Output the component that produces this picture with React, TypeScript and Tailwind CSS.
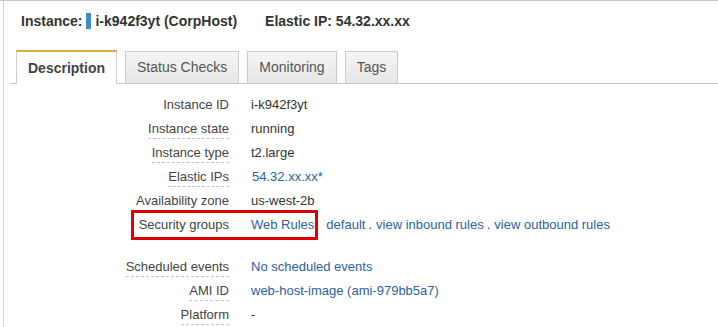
import React from 'react'

type Row = { label: string; value: React.ReactNode; dashed?: boolean; gapBefore?: boolean; highlight?: boolean }

const Link: React.FC<{ children: React.ReactNode }> = ({ children }) => (
  <a className="text-[#2b63a3] cursor-pointer">{children}</a>
)

const rows: Row[] = [
  { label: 'Instance ID', value: 'i-k942f3yt' },
  { label: 'Instance state', value: 'running', dashed: true },
  { label: 'Instance type', value: 't2.large', dashed: true },
  { label: 'Elastic IPs', value: <span className="ml-[1px]"><Link>54.32.xx.xx*</Link></span>, dashed: true },
  { label: 'Availability zone', value: 'us-west-2b', dashed: true },
  {
    label: 'Security groups',
    highlight: true,
    value: (
      <>
        <Link>Web Rules</Link>
        <span className="ml-[12px]"><Link>default</Link></span>
        <span className="ml-[3px]">.</span>
        <span className="ml-[4px]"><Link>view inbound rules</Link></span>
        <span className="ml-[3px]">.</span>
        <span className="ml-[4px]"><Link>view outbound rules</Link></span>
      </>
    ),
  },
  { label: 'Scheduled events', value: <Link>No scheduled events</Link>, dashed: true, gapBefore: true },
  { label: 'AMI ID', value: <Link>web-host-image (ami-979bb5a7)</Link>, dashed: true },
  { label: 'Platform', value: '-', dashed: true },
]

const tabs = ['Description', 'Status Checks', 'Monitoring', 'Tags']

export default function App() {
  return (
    <div className="w-[718px] h-[327px] overflow-hidden bg-white border-t border-[#c8c8c8] font-['Liberation_Sans',Arial,sans-serif]">
      <div className="ml-[3px] h-full border-l border-[#d4d4d4]">
        {/* header */}
        <div className="h-[40px] flex items-center pl-[17px] text-[14px] font-bold text-[#333]">
          <span>Instance:</span>
          <span className="ml-[4px] w-[5px] h-[16px] bg-[#3c8dd0]" />
          <span className="ml-[4px]">i-k942f3yt (CorpHost)</span>
          <span className="ml-[28px]">Elastic IP: 54.32.xx.xx</span>
        </div>

        {/* tabs */}
        <div className="ml-[6px] mt-[9px] h-[34px] flex items-end gap-[8px] pl-[6px] border-b border-[#c6c6c6]">
          {tabs.map((t, i) =>
            i === 0 ? (
              <div
                key={t}
                className="-mb-px h-[34px] px-[11px] flex items-center bg-white border-x border-[#cfcfcf] border-t-2 border-t-[#e8a73c] text-[14px] font-bold text-[#444]"
              >
                {t}
              </div>
            ) : (
              <div
                key={t}
                className="h-[32px] px-[11px] flex items-center bg-gradient-to-b from-[#f6f6f6] to-[#e6e6e6] border border-b-0 border-[#cccccc] text-[14px] text-[#555]"
              >
                {t}
              </div>
            )
          )}
        </div>

        {/* details */}
        <div className="pt-[9px] text-[13px]">
          {rows.map(r => (
            <div key={r.label} className={`relative flex h-[24px] items-center ${r.gapBefore ? 'mt-[18px]' : ''}`}>
              <div className="w-[225px] text-right text-[#444]">
                <span className={`inline-block leading-[18px] ${r.dashed ? 'border-b border-dashed border-[#c4c4c4]' : ''}`}>
                  {r.label}
                </span>
              </div>
              <div className="ml-[22px] text-[#333] leading-[18px]">{r.value}</div>
              {r.highlight && (
                <div className="absolute left-[127px] top-[-3px] w-[187px] h-[30px] border-[3px] border-[#e00000] pointer-events-none" />
              )}
            </div>
          ))}
        </div>
      </div>
    </div>
  )
}
